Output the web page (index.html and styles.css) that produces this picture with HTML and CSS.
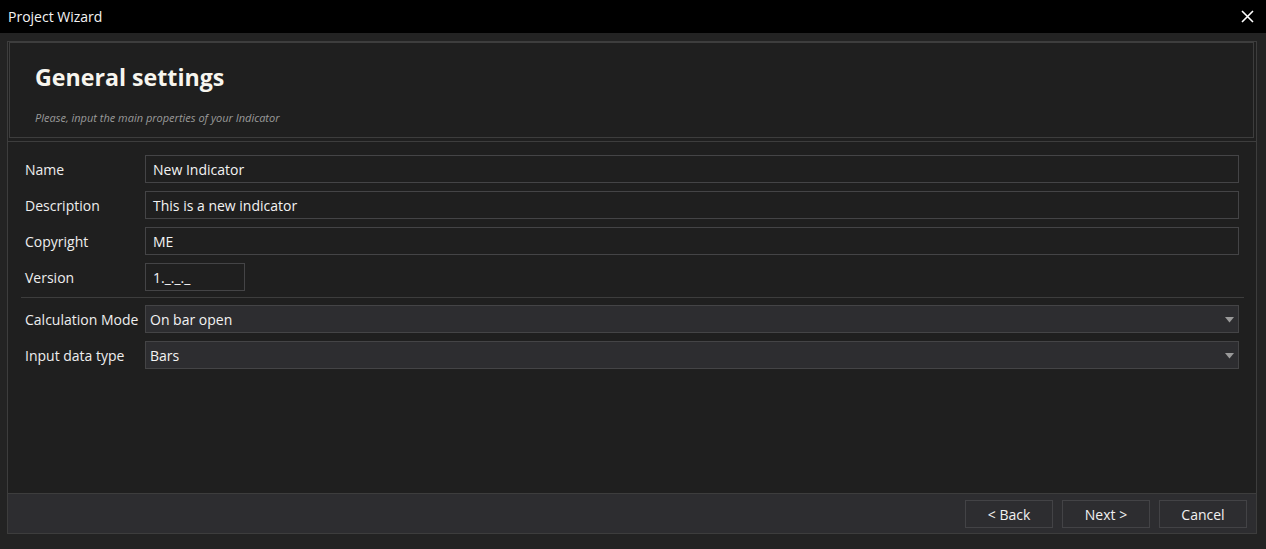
FILE: index.html
```html
<!DOCTYPE html>
<html>
<head>
<meta charset="utf-8">
<title>Project Wizard</title>
<link rel="stylesheet" href="styles.css">
</head>
<body>
<div class="titlebar">
  <span class="title">Project Wizard</span>
  <span class="close">
    <svg width="13" height="13" viewBox="0 0 13 13"><path d="M1 1 L12 12 M12 1 L1 12" stroke="#ffffff" stroke-width="1.6" fill="none"/></svg>
  </span>
</div>
<div class="window">
  <div class="panel">
    <div class="header">
      <div class="h-title">General settings</div>
      <div class="h-sub">Please, input the main properties of your Indicator</div>
    </div>
    <div class="form">
      <div class="rows">
        <label class="lbl">Name</label>
        <div class="input">New Indicator</div>
        <label class="lbl">Description</label>
        <div class="input">This is a new indicator</div>
        <label class="lbl">Copyright</label>
        <div class="input">ME</div>
        <label class="lbl">Version</label>
        <div class="input short">1._._._</div>
      </div>
      <div class="sep"></div>
      <div class="rows">
        <label class="lbl">Calculation Mode</label>
        <div class="combo"><span>On bar open</span><svg class="arrow" width="9" height="6" viewBox="0 0 9 6"><path d="M0 0 H9 L4.5 5.5 Z" fill="#9a9a9a"/></svg></div>
        <label class="lbl">Input data type</label>
        <div class="combo"><span>Bars</span><svg class="arrow" width="9" height="6" viewBox="0 0 9 6"><path d="M0 0 H9 L4.5 5.5 Z" fill="#9a9a9a"/></svg></div>
      </div>
    </div>
    <div class="footer">
      <button class="btn">&lt; Back</button>
      <button class="btn">Next &gt;</button>
      <button class="btn">Cancel</button>
    </div>
  </div>
</div>
</body>
</html>
```
FILE: styles.css
```css
html, body {
  margin: 0;
  padding: 0;
  background: #232323;
  font-family: "Open Sans", "Noto Sans", sans-serif;
  color: #f1f1f1;
}
.titlebar {
  height: 33px;
  background: #000;
  display: flex;
  align-items: center;
  justify-content: space-between;
  padding: 0 12px 0 8px;
}
.title {
  font-size: 14px;
  line-height: 33px;
  color: #f4f4f4;
}
.close {
  display: flex;
  margin-top: -1px;
}
.window {
  padding: 8px 9px 0 7px;
}
.panel {
  height: 493px;
  box-sizing: border-box;
  border: 1px solid #3d3d3d;
  background: #1f1f1f;
  display: flex;
  flex-direction: column;
}
.header {
  margin: 0 2px 0 1px;
  height: 96px;
  flex: none;
  box-sizing: border-box;
  border: 1px solid #3d3d3d;
  padding: 19px 0 0 25px;
}
.h-title {
  font-size: 23.2px;
  font-weight: 700;
  line-height: 31px;
  color: #f7f5ee;
}
.h-sub {
  margin-top: 17px;
  font-size: 11px;
  font-style: italic;
  line-height: 15px;
  color: #9a9a9a;
}
.form {
  flex: 1;
  margin-top: 3px;
  border-top: 1px solid #3d3d3d;
  padding: 13px 12px 0 13px;
}
.rows {
  display: grid;
  grid-template-columns: 120px 1fr;
  row-gap: 8px;
  padding: 0 5px 0 4px;
}
.lbl {
  font-size: 14px;
  line-height: 27px;
  padding-top: 1px;
  color: #eeeeee;
}
.input {
  height: 28px;
  box-sizing: border-box;
  border: 1px solid #444446;
  padding: 1px 0 0 7px;
  font-size: 14px;
  line-height: 25px;
  color: #f3f3f3;
}
.input.short {
  width: 100px;
}
.sep {
  height: 1px;
  background: #3d3d3d;
  margin: 6px 0 7px;
}
.combo {
  height: 28px;
  box-sizing: border-box;
  border: 1px solid #444446;
  background: #2d2d30;
  padding: 1px 4px 0 4px;
  font-size: 14px;
  line-height: 25px;
  color: #f3f3f3;
  display: flex;
  align-items: center;
  justify-content: space-between;
}
.arrow {
  display: block;
}
.footer {
  height: 40px;
  flex: none;
  box-sizing: border-box;
  border-top: 1px solid #3d3d3d;
  background: #2d2d30;
  display: flex;
  justify-content: flex-end;
  align-items: flex-start;
  gap: 9px;
  padding: 6px 9px 0 0;
}
.btn {
  width: 88px;
  height: 28px;
  box-sizing: border-box;
  border: 1px solid #434346;
  background: #2d2d30;
  color: #f1f1f1;
  font-family: "Open Sans", "Noto Sans", sans-serif;
  font-size: 14px;
  line-height: 25px;
  padding: 1px 0 0 0;
  margin: 0;
}
```
